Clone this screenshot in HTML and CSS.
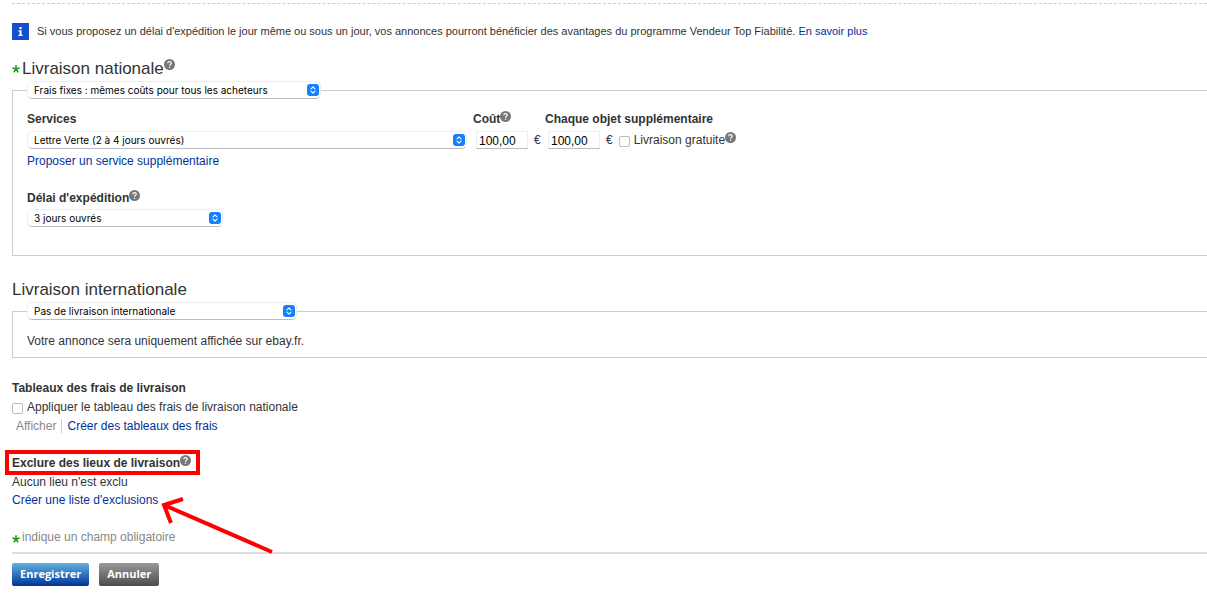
FILE: index.html
```html
<!DOCTYPE html>
<html lang="fr">
<head>
    <meta charset="UTF-8">
    <meta name="viewport" content="width=device-width, initial-scale=1.0">
    <title>Options de livraison</title>
    <link rel="stylesheet" href="styles.css">
</head>
<body>
    <!-- Icônes partagées -->
    <svg class="sprite" aria-hidden="true">
        <symbol id="help" viewBox="0 0 11 11">
            <circle cx="5.5" cy="5.5" r="5.5" fill="#777"/>
            <path d="M3.7 4.2C3.8 2.2 7.3 2.2 7.3 4.1C7.3 5.3 5.6 5.2 5.6 6.7" fill="none" stroke="#fff" stroke-width="1.2"/>
            <circle cx="5.6" cy="8.3" r="0.7" fill="#fff"/>
        </symbol>
        <symbol id="arrows" viewBox="0 0 12 12">
            <rect width="12" height="12" rx="3" fill="#1480ff"/>
            <path d="M4 4.9L6 2.9L8 4.9M4 7.1L6 9.1L8 7.1" fill="none" stroke="#fff" stroke-width="1.1" stroke-linecap="round" stroke-linejoin="round"/>
        </symbol>
        <symbol id="star" viewBox="0 0 8 8">
            <path d="M4 0.3V4M0.4 3L4 4M7.6 3L4 4M1.8 7.3L4 4M6.2 7.3L4 4" fill="none" stroke="#1a9a1a" stroke-width="1.5"/>
        </symbol>
    </svg>

    <form class="shipping">
        <p class="notice">
            <svg class="info" viewBox="0 0 17 17" aria-hidden="true">
                <rect width="17" height="17" fill="#1450cd"/>
                <path d="M7.4 4H9.6V6H7.4ZM6.4 7.2H9.5V11.8H10.6V13H6.4V11.8H7.6V8.4H6.4Z" fill="#fff"/>
            </svg>
            <span>Si vous proposez un délai d'expédition le jour même ou sous un jour, vos annonces pourront bénéficier des avantages du programme Vendeur Top Fiabilité. <a href="#">En savoir plus</a></span>
        </p>

        <h2><svg class="star"><use href="#star"/></svg><label for="national">Livraison nationale</label><svg class="help"><use href="#help"/></svg></h2>
        <fieldset class="national">
            <legend>
                <span class="select cost-type">
                    <select id="national"><option>Frais fixes : mêmes coûts pour tous les acheteurs</option></select>
                    <svg><use href="#arrows"/></svg>
                </span>
            </legend>
            <div class="services">
                <label class="title" for="service">Services</label>
                <label class="title" for="cost">Coût<svg class="help"><use href="#help"/></svg></label>
                <label class="title" for="extra">Chaque objet supplémentaire</label>
                <span class="select">
                    <select id="service"><option>Lettre Verte (2 à 4 jours ouvrés)</option></select>
                    <svg><use href="#arrows"/></svg>
                </span>
                <span class="price"><input type="text" id="cost" value="100,00"> €</span>
                <span class="price">
                    <input type="text" id="extra" value="100,00"> €
                    <span class="check"><input type="checkbox" id="free"><label for="free">Livraison gratuite<svg class="help"><use href="#help"/></svg></label></span>
                </span>
            </div>
            <a class="add-service" href="#">Proposer un service supplémentaire</a>
            <label class="title" for="delay">Délai d'expédition<svg class="help"><use href="#help"/></svg></label>
            <span class="select delay">
                <select id="delay"><option>3 jours ouvrés</option></select>
                <svg><use href="#arrows"/></svg>
            </span>
        </fieldset>

        <h2><label for="international">Livraison internationale</label></h2>
        <fieldset class="international">
            <legend>
                <span class="select zone">
                    <select id="international"><option>Pas de livraison internationale</option></select>
                    <svg><use href="#arrows"/></svg>
                </span>
            </legend>
            <p>Votre annonce sera uniquement affichée sur ebay.fr.</p>
        </fieldset>

        <section class="block">
            <h3>Tableaux des frais de livraison</h3>
            <p class="check"><input type="checkbox" id="table"><label for="table">Appliquer le tableau des frais de livraison nationale</label></p>
            <p class="actions"><span class="disabled">Afficher</span><a href="#">Créer des tableaux des frais</a></p>
        </section>

        <section class="block exclusions">
            <h3>Exclure des lieux de livraison<svg class="help"><use href="#help"/></svg></h3>
            <p>Aucun lieu n'est exclu</p>
            <p><a href="#">Créer une liste d'exclusions</a></p>
            <span class="frame"></span>
            <svg class="arrow" viewBox="0 0 114 60" aria-hidden="true">
                <path d="M112 56L4 9M23 3L4 9L11 27" fill="none" stroke="#f00" stroke-width="4"/>
            </svg>
        </section>

        <p class="required"><svg class="star"><use href="#star"/></svg>indique un champ obligatoire</p>

        <div class="buttons">
            <button type="submit" class="save">Enregistrer</button>
            <button type="button" class="cancel">Annuler</button>
        </div>
    </form>
</body>
</html>
```
FILE: styles.css
```css
body {
    margin: 0;
    background-color: #fff;
    color: #333;
    font-family: "Liberation Sans", Arial, sans-serif;
    font-size: 12px;
    line-height: 18px;
}

h2, h3, p {
    margin: 0;
}

a {
    color: #039;
    text-decoration: none;
}

a:hover {
    text-decoration: underline;
}

.sprite {
    position: absolute;
    width: 0;
    height: 0;
}

.shipping {
    margin: 3px 0 0 12px;
    border-top: 1px dashed #ccc;
}

.notice {
    display: flex;
    align-items: center;
    gap: 8px;
    padding-top: 18px;
    font-size: 11px;
}

.info {
    width: 17px;
    height: 17px;
    flex: none;
}

h2 {
    font-size: 17px;
    font-weight: normal;
    line-height: 25px;
    margin-top: 16px;
}

h3 {
    font-size: 12px;
    line-height: 19px;
}

.help {
    width: 11px;
    height: 11px;
    vertical-align: 1px;
}

h2 .help {
    vertical-align: 4px;
}

.star {
    width: 8px;
    height: 8px;
    margin-right: 2px;
    vertical-align: 1px;
}

fieldset {
    display: block;
    min-width: 0;
    margin: 0;
    padding: 0 14px;
    border: 1px solid #ccc;
    border-right: 0;
}

legend {
    padding: 0;
}

.select {
    position: relative;
    display: block;
}

.select select {
    appearance: none;
    display: block;
    width: 100%;
    height: 18px;
    padding: 0 24px 0 6px;
    border: 1px solid #eee;
    border-bottom-color: #bbb;
    border-radius: 5px;
    background-color: #fff;
    color: #000;
    font: 10px/16px Inter, sans-serif;
}

.select svg {
    position: absolute;
    top: 3px;
    right: 2px;
    width: 12px;
    height: 12px;
    pointer-events: none;
}

.cost-type {
    width: 294px;
}

.zone {
    width: 270px;
}

.delay {
    width: 196px;
    margin-top: 2px;
}

.title {
    font-weight: bold;
}

.national {
    margin-bottom: 21px;
    padding-bottom: 28px;
}

.services {
    display: grid;
    grid-template-columns: 440px 66px 1fr;
    column-gap: 6px;
    row-gap: 3px;
    padding-top: 11px;
}

.price {
    display: flex;
    align-items: center;
    gap: 6px;
    padding-left: 3px;
}

.price input[type="text"] {
    box-sizing: border-box;
    width: 52px;
    height: 18px;
    padding: 2px 2px 0;
    border: 1px solid #eee;
    border-bottom-color: #bbb;
    color: #000;
    font: 12px "Liberation Sans", Arial, sans-serif;
}

input[type="checkbox"] {
    appearance: none;
    box-sizing: border-box;
    width: 11px;
    height: 11px;
    margin: 2px 0 0;
    border: 1px solid #bbb;
    border-radius: 2px;
    background-color: #fff;
}

input[type="checkbox"]:checked {
    background-color: #1480ff;
}

.add-service {
    display: block;
    margin: 3px 0 19px;
}

.international p {
    padding: 12px 0 7px;
}

.block {
    position: relative;
    margin-top: 21px;
}

.check {
    display: flex;
    align-items: center;
    gap: 4px;
}

.actions {
    display: flex;
    align-items: center;
    padding-left: 4px;
    line-height: 14px;
    padding-top: 3px;
}

.disabled {
    margin-right: 5px;
    padding-right: 5px;
    border-right: 1px solid #ccc;
    color: #888;
}

/* Mise en évidence de la section */
.frame {
    position: absolute;
    top: -4px;
    left: -7px;
    box-sizing: border-box;
    width: 195px;
    height: 25px;
    border: 4px solid #f00;
}

.arrow {
    position: absolute;
    top: 42px;
    left: 148px;
    width: 114px;
    height: 60px;
}

.required {
    margin-top: 19px;
    padding-bottom: 6px;
    border-bottom: 2px solid #ddd;
    color: #888;
}

.required .star {
    vertical-align: -2px;
}

.buttons {
    display: flex;
    gap: 10px;
    padding-top: 9px;
}

.buttons button {
    height: 23px;
    padding: 0 8px 2px;
    border: 0;
    border-radius: 2px;
    color: #fff;
    font: bold 11px "Open Sans", sans-serif;
    cursor: pointer;
}

.save {
    background: linear-gradient(#5fb2de, #039);
}

.cancel {
    background: linear-gradient(#999, #4c4c4c);
}
```
